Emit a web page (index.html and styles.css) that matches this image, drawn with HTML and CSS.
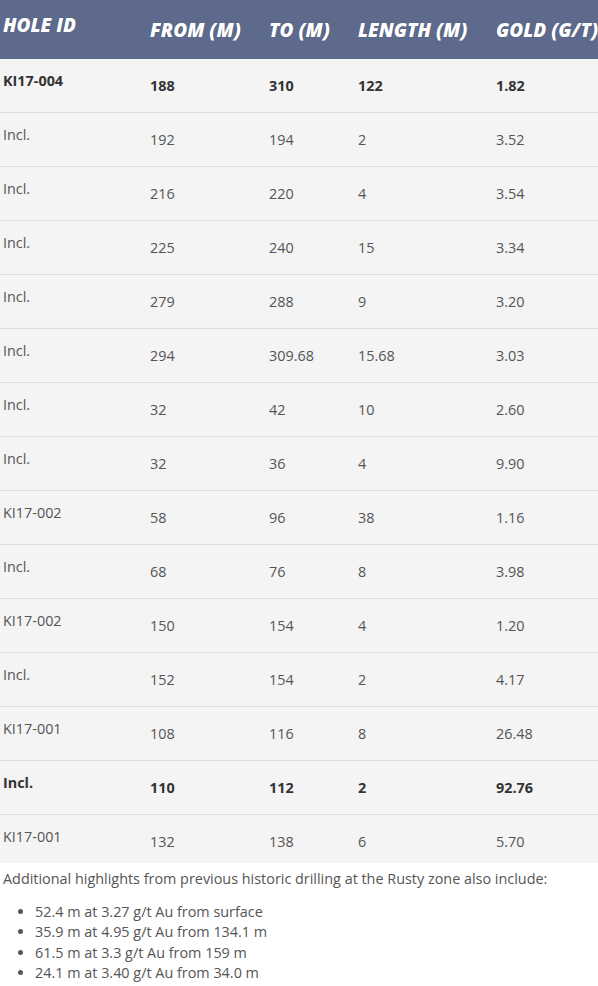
FILE: index.html
```html
<!DOCTYPE html>
<html>
<head>
<meta charset="utf-8">
<link rel="stylesheet" href="styles.css">
</head>
<body>
<table class="drill">
  <colgroup>
    <col class="c1"><col class="c2"><col class="c3"><col class="c4"><col class="c5">
  </colgroup>
  <thead>
    <tr><th class="first">HOLE ID</th><th>FROM (M)</th><th>TO (M)</th><th>LENGTH (M)</th><th>GOLD (G/T)</th></tr>
  </thead>
  <tbody>
    <tr class="bold"><td class="first">KI17-004</td><td>188</td><td>310</td><td>122</td><td>1.82</td></tr>
    <tr><td class="first">Incl.</td><td>192</td><td>194</td><td>2</td><td>3.52</td></tr>
    <tr><td class="first">Incl.</td><td>216</td><td>220</td><td>4</td><td>3.54</td></tr>
    <tr><td class="first">Incl.</td><td>225</td><td>240</td><td>15</td><td>3.34</td></tr>
    <tr><td class="first">Incl.</td><td>279</td><td>288</td><td>9</td><td>3.20</td></tr>
    <tr><td class="first">Incl.</td><td>294</td><td>309.68</td><td>15.68</td><td>3.03</td></tr>
    <tr><td class="first">Incl.</td><td>32</td><td>42</td><td>10</td><td>2.60</td></tr>
    <tr><td class="first">Incl.</td><td>32</td><td>36</td><td>4</td><td>9.90</td></tr>
    <tr><td class="first">KI17-002</td><td>58</td><td>96</td><td>38</td><td>1.16</td></tr>
    <tr><td class="first">Incl.</td><td>68</td><td>76</td><td>8</td><td>3.98</td></tr>
    <tr><td class="first">KI17-002</td><td>150</td><td>154</td><td>4</td><td>1.20</td></tr>
    <tr><td class="first">Incl.</td><td>152</td><td>154</td><td>2</td><td>4.17</td></tr>
    <tr><td class="first">KI17-001</td><td>108</td><td>116</td><td>8</td><td>26.48</td></tr>
    <tr class="bold"><td class="first">Incl.</td><td>110</td><td>112</td><td>2</td><td>92.76</td></tr>
    <tr class="last"><td class="first">KI17-001</td><td>132</td><td>138</td><td>6</td><td>5.70</td></tr>
  </tbody>
</table>
<p class="note">Additional highlights from previous historic drilling at the Rusty zone also include:</p>
<ul class="highlights">
  <li>52.4 m at 3.27 g/t Au from surface</li>
  <li>35.9 m at 4.95 g/t Au from 134.1 m</li>
  <li>61.5 m at 3.3 g/t Au from 159 m</li>
  <li>24.1 m at 3.40 g/t Au from 34.0 m</li>
</ul>
</body>
</html>
```
FILE: styles.css
```css
html, body {
  margin: 0;
  padding: 0;
  background: #ffffff;
}
body {
  font-family: "Open Sans", "DejaVu Sans", sans-serif;
  font-size: 14.4px;
  line-height: 20px;
  color: #555555;
}
.drill {
  width: 598px;
  border-collapse: collapse;
  table-layout: fixed;
  background: #f4f4f4;
}
.c1 { width: 147px; }
.c2 { width: 119px; }
.c3 { width: 89px; }
.c4 { width: 138px; }
.c5 { width: 105px; }
.drill th {
  background: #5d6a8c;
  color: #ffffff;
  font-size: 19px;
  line-height: 24px;
  font-weight: 800;
  font-style: italic;
  text-align: left;
  padding: 18px 0 17px 3px;
  white-space: nowrap;
  overflow: visible;
  text-shadow: 0 0 1px rgba(0,0,0,0.25);
  vertical-align: top;
}
.drill th.first {
  padding-top: 13px;
  padding-bottom: 22px;
}
.drill td {
  padding: 17px 0 16px 3px;
  border-bottom: 1px solid #dddddd;
  vertical-align: top;
  white-space: nowrap;
}
.drill td.first {
  padding-top: 12px;
  padding-bottom: 21px;
}
.drill tr.last td {
  border-bottom: none;
  padding-bottom: 11px;
}
.drill tr.last td.first {
  padding-bottom: 16px;
}
.drill tr.bold td {
  font-weight: 700;
  color: #333333;
}
.note {
  margin: 6px 0 0 0;
  padding-left: 3px;
}
.highlights {
  margin: 13px 0 0 0;
  padding-left: 35px;
  line-height: 20.4px;
}
```
